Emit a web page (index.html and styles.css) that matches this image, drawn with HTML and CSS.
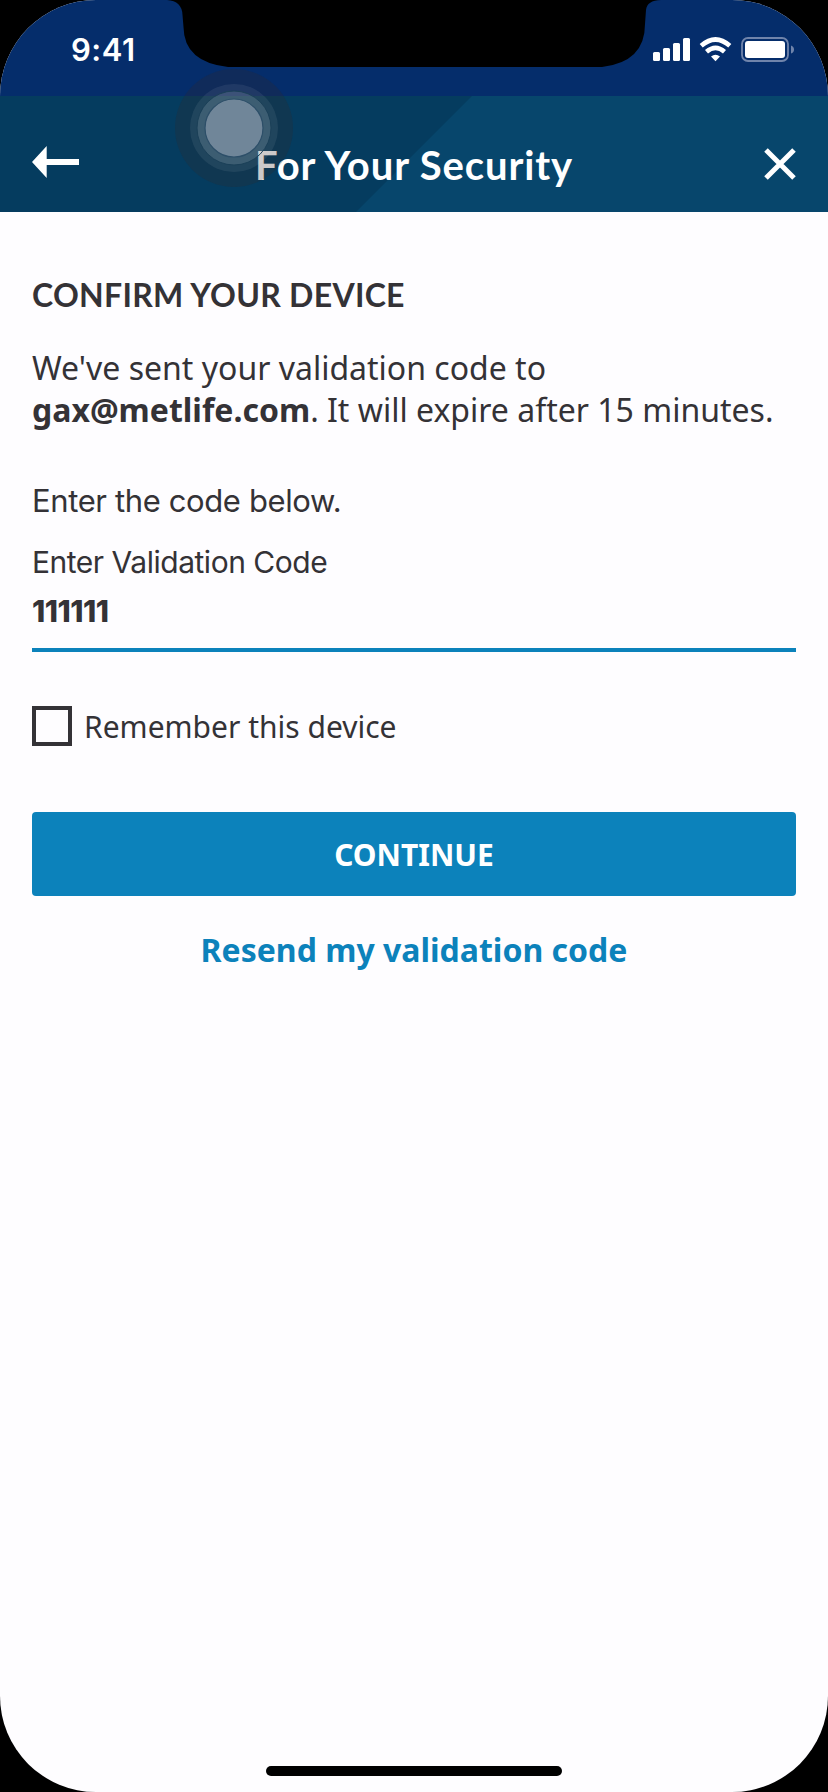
FILE: index.html
```html
<!DOCTYPE html>
<html lang="en">
<head>
<meta charset="utf-8">
<title>For Your Security</title>
<link rel="stylesheet" href="styles.css">
</head>
<body>
<div class="screen">
  <div class="status">
    <span class="time">9:41</span>
    <svg class="status-icons" width="144" height="28" viewBox="652 36 144 28">
      <g fill="#fff">
        <rect x="653" y="52" width="7" height="9" rx="1.5"/>
        <rect x="663" y="48" width="7" height="13" rx="1.5"/>
        <rect x="673" y="43" width="7" height="18" rx="1.5"/>
        <rect x="683" y="38" width="7" height="23" rx="1.5"/>
        <path d="M715.500 61.300L711 56.500Q715.500 53 720 56.500Z"/>
        <rect x="745" y="41" width="40" height="17" rx="3"/>
      </g>
      <g fill="none" stroke="#fff" stroke-width="4.600">
        <path d="M701.200 45.800Q715.500 33.200 729.800 45.800"/>
        <path d="M706.500 51.800Q715.500 44 724.500 51.800"/>
      </g>
      <rect x="742" y="38" width="46" height="23" rx="6" fill="none" stroke="#7084ab" stroke-width="1.800"/>
      <path d="M791 45.500Q794 46.500 794 49.500T791 53.500Z" fill="#7084ab"/>
    </svg>
  </div>
  <header class="header">
    <svg class="back" width="48" height="34" viewBox="0 0 48 34"><path d="M0 17L14.700 1V14H47V20H14.700V33Z" fill="#fff"/></svg>
    <h1 class="title">For Your Security</h1>
    <svg class="close" width="48" height="32" viewBox="-16 0 48 32"><path d="M2 2L30 30M30 2L2 30" stroke="#fff" stroke-width="5"/></svg>
  </header>
  <main class="content">
    <h2 class="heading">CONFIRM YOUR DEVICE</h2>
    <p class="message">We've sent your validation code to <b class="email">gax@metlife.com</b>. It will expire after 15 minutes.</p>
    <p class="hint">Enter the code below.</p>
    <div class="field">
      <div class="label">Enter Validation Code</div>
      <div class="value">111111</div>
    </div>
    <div class="remember"><span class="box"></span><span class="remember-text">Remember this device</span></div>
    <button class="continue"><span class="continue-text">CONTINUE</span></button>
    <a class="resend"><span class="resend-text">Resend my validation code</span></a>
  </main>
  <div class="home-bar"></div>
  <svg class="touch" width="120" height="120" viewBox="-60 -60 120 120">
    <circle r="59" fill="#322626" fill-opacity=".25"/>
    <circle r="44" fill="#fff" fill-opacity=".07"/>
    <circle r="37" fill="#fff" fill-opacity=".13" stroke="#1b4058" stroke-width="1"/>
    <circle r="29" fill="#708699" stroke="#2d4f69" stroke-width="1.200"/>
  </svg>
  <svg class="notch" width="494" height="68" viewBox="167 0 494 68">
    <path d="M167 0Q182 1 182.500 15L183.500 27Q184 62 228 67H602Q645 62 645 24L646 10Q647 0 662 0Z" fill="#000"/>
  </svg>
</div>
</body>
</html>
```
FILE: styles.css
```css
body {
  margin: 0;
  background: #000;
}
h1, h2, p {
  margin: 0;
}
.screen {
  position: relative;
  box-sizing: border-box;
  width: 828px;
  height: 1792px;
  display: flex;
  flex-direction: column;
  overflow: hidden;
  border-radius: 96px;
  background: #fefdff;
  color: #343236;
  font-family: "Noto Sans", sans-serif;
}
.status {
  box-sizing: border-box;
  height: 96px;
  padding: 36px 32px 0 71px;
  display: flex;
  justify-content: space-between;
  background: #052d6b;
}
.time {
  font: 600 31px/28px Inter, sans-serif;
  letter-spacing: 0.500px;
  color: #fff;
}
.header {
  position: relative;
  box-sizing: border-box;
  height: 116px;
  padding: 43px 32px 0;
  display: flex;
  justify-content: space-between;
  background: #053c5f;
}
.header::before {
  content: "";
  position: absolute;
  inset: 0;
  background: #07466c;
  clip-path: polygon(472px 0, 100% 0, 100% 100%, 356px 100%);
}
.back {
  position: relative;
  margin-top: 6px;
}
.title {
  position: relative;
  padding-top: 2px;
  font: 700 40px/48px Lato, sans-serif;
  letter-spacing: 0.900px;
  color: #fff;
}
.close {
  position: relative;
  margin-top: 9px;
}
.content {
  flex: 1;
  padding: 63px 32px 0;
}
.heading {
  font: 700 32px/40px Lato, sans-serif;
  letter-spacing: 0.280px;
}
.message {
  margin-top: 32px;
  font-size: 32px;
  line-height: 42px;
}
.hint {
  margin-top: 50px;
  font: 400 31px/40px Inter, sans-serif;
  letter-spacing: -0.380px;
}
.field {
  height: 106px;
  margin-top: 21px;
  border-bottom: 4px solid #0c82bb;
}
.label {
  font: 400 30px/40px Inter, sans-serif;
  letter-spacing: -0.480px;
}
.value {
  margin-top: 9px;
  font: 800 30px/40px Inter, sans-serif;
  letter-spacing: -0.500px;
}
.remember {
  height: 40px;
  margin-top: 54px;
  display: flex;
  gap: 12px;
  font-size: 30px;
  line-height: 42px;
}
.box {
  box-sizing: border-box;
  width: 40px;
  height: 40px;
  border: 4px solid #343236;
}
.continue {
  display: block;
  width: 100%;
  height: 84px;
  margin-top: 66px;
  padding: 2px 0 0;
  border: 0;
  border-radius: 4px;
  background: #0c82bb;
  color: #fff;
  font: 700 30px/82px "Noto Sans", sans-serif;
}
.resend {
  display: block;
  margin-top: 32px;
  text-align: center;
  font-size: 32px;
  font-weight: 700;
  line-height: 44px;
  color: #0c82bb;
}
.home-bar {
  width: 296px;
  height: 10px;
  margin: 0 auto 16px;
  border-radius: 5px;
  background: #000;
}
.touch {
  position: absolute;
  left: 174px;
  top: 68px;
}
.notch {
  position: absolute;
  left: 167px;
  top: 0;
}
```
